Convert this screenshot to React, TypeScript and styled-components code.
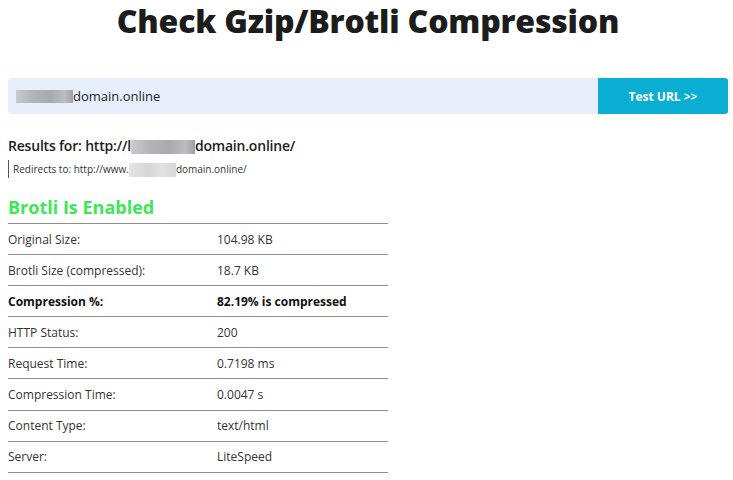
import React from 'react';
import styled, { createGlobalStyle } from 'styled-components';

const GlobalStyle = createGlobalStyle`
  body {
    margin: 0;
    background: #ffffff;
    font-family: 'Open Sans', 'Liberation Sans', sans-serif;
    color: #222222;
  }
`;

const Page = styled.div`
  padding: 0 5px 0 8px;
`;

const Title = styled.h1`
  margin: 0;
  text-align: center;
  font-size: 32px;
  line-height: 42px;
  font-weight: 800;
  letter-spacing: -0.2px;
  color: #1c1c1c;
`;

const Form = styled.form`
  display: flex;
  height: 36px;
  margin-top: 36px;
`;

const UrlField = styled.div`
  flex: 1;
  display: flex;
  align-items: center;
  padding-left: 8px;
  background: #e8effc;
  border-radius: 3px 0 0 3px;
  font-size: 13px;
  color: #232323;
`;

const Blur = styled.span<{ $w: number; $h: number; $light?: boolean }>`
  display: inline-block;
  width: ${({ $w }) => $w}px;
  height: ${({ $h }) => $h}px;
  vertical-align: middle;
  background: ${({ $light }) =>
    $light
      ? 'linear-gradient(90deg, #e4e4e4, #d6d6d6 40%, #e2e2e2 70%, #d8d8d8)'
      : 'linear-gradient(90deg, #c9cacd, #b3b4b8 30%, #a9aaae 60%, #bcbdc1 85%, #9fa0a4)'};
  filter: blur(0.6px);
`;

const TestButton = styled.button`
  width: 130px;
  border: none;
  border-radius: 0 3px 3px 0;
  background: #0baed3;
  color: #ffffff;
  font-family: inherit;
  font-size: 12px;
  font-weight: 700;
`;

const ResultsFor = styled.h2`
  margin: 22px 0 0;
  font-size: 14px;
  line-height: 20px;
  font-weight: 600;
  letter-spacing: -0.2px;
  color: #1d1d1d;
`;

const Redirect = styled.div`
  margin-top: 4px;
  padding-left: 4px;
  height: 18px;
  line-height: 18px;
  border-left: 1px solid #555555;
  font-size: 10px;
  color: #333333;
`;

const Status = styled.h3`
  margin: 17px 0 0;
  font-size: 18px;
  line-height: 24px;
  font-weight: 700;
  color: #3ee65a;
`;

const Table = styled.div`
  width: 380px;
  margin-top: 4px;
  border-bottom: 1px solid #8f8f8f;
`;

const Row = styled.div<{ $bold?: boolean }>`
  display: grid;
  grid-template-columns: 209px 1fr;
  height: 30.1px;
  align-items: center;
  border-top: 1px solid #8f8f8f;
  font-size: 12px;
  font-weight: ${({ $bold }) => ($bold ? 700 : 400)};
  color: ${({ $bold }) => ($bold ? '#111111' : '#333333')};
`;

const rows: [string, string, boolean?][] = [
  ['Original Size:', '104.98 KB'],
  ['Brotli Size (compressed):', '18.7 KB'],
  ['Compression %:', '82.19% is compressed', true],
  ['HTTP Status:', '200'],
  ['Request Time:', '0.7198 ms'],
  ['Compression Time:', '0.0047 s'],
  ['Content Type:', 'text/html'],
  ['Server:', 'LiteSpeed'],
];

export default function App() {
  return (
    <Page>
      <GlobalStyle />
      <Title>Check Gzip/Brotli Compression</Title>
      <Form onSubmit={(e) => e.preventDefault()}>
        <UrlField>
          <Blur $w={57} $h={13} />
          domain.online
        </UrlField>
        <TestButton type="submit">Test URL &gt;&gt;</TestButton>
      </Form>
      <ResultsFor>
        Results for: http://l
        <Blur $w={64} $h={14} />
        domain.online/
      </ResultsFor>
      <Redirect>
        Redirects to: http://www.
        <Blur $w={47} $h={14} $light />
        domain.online/
      </Redirect>
      <Status>Brotli Is Enabled</Status>
      <Table>
        {rows.map(([label, value, bold]) => (
          <Row key={label} $bold={bold}>
            <span>{label}</span>
            <span>{value}</span>
          </Row>
        ))}
      </Table>
    </Page>
  );
}
